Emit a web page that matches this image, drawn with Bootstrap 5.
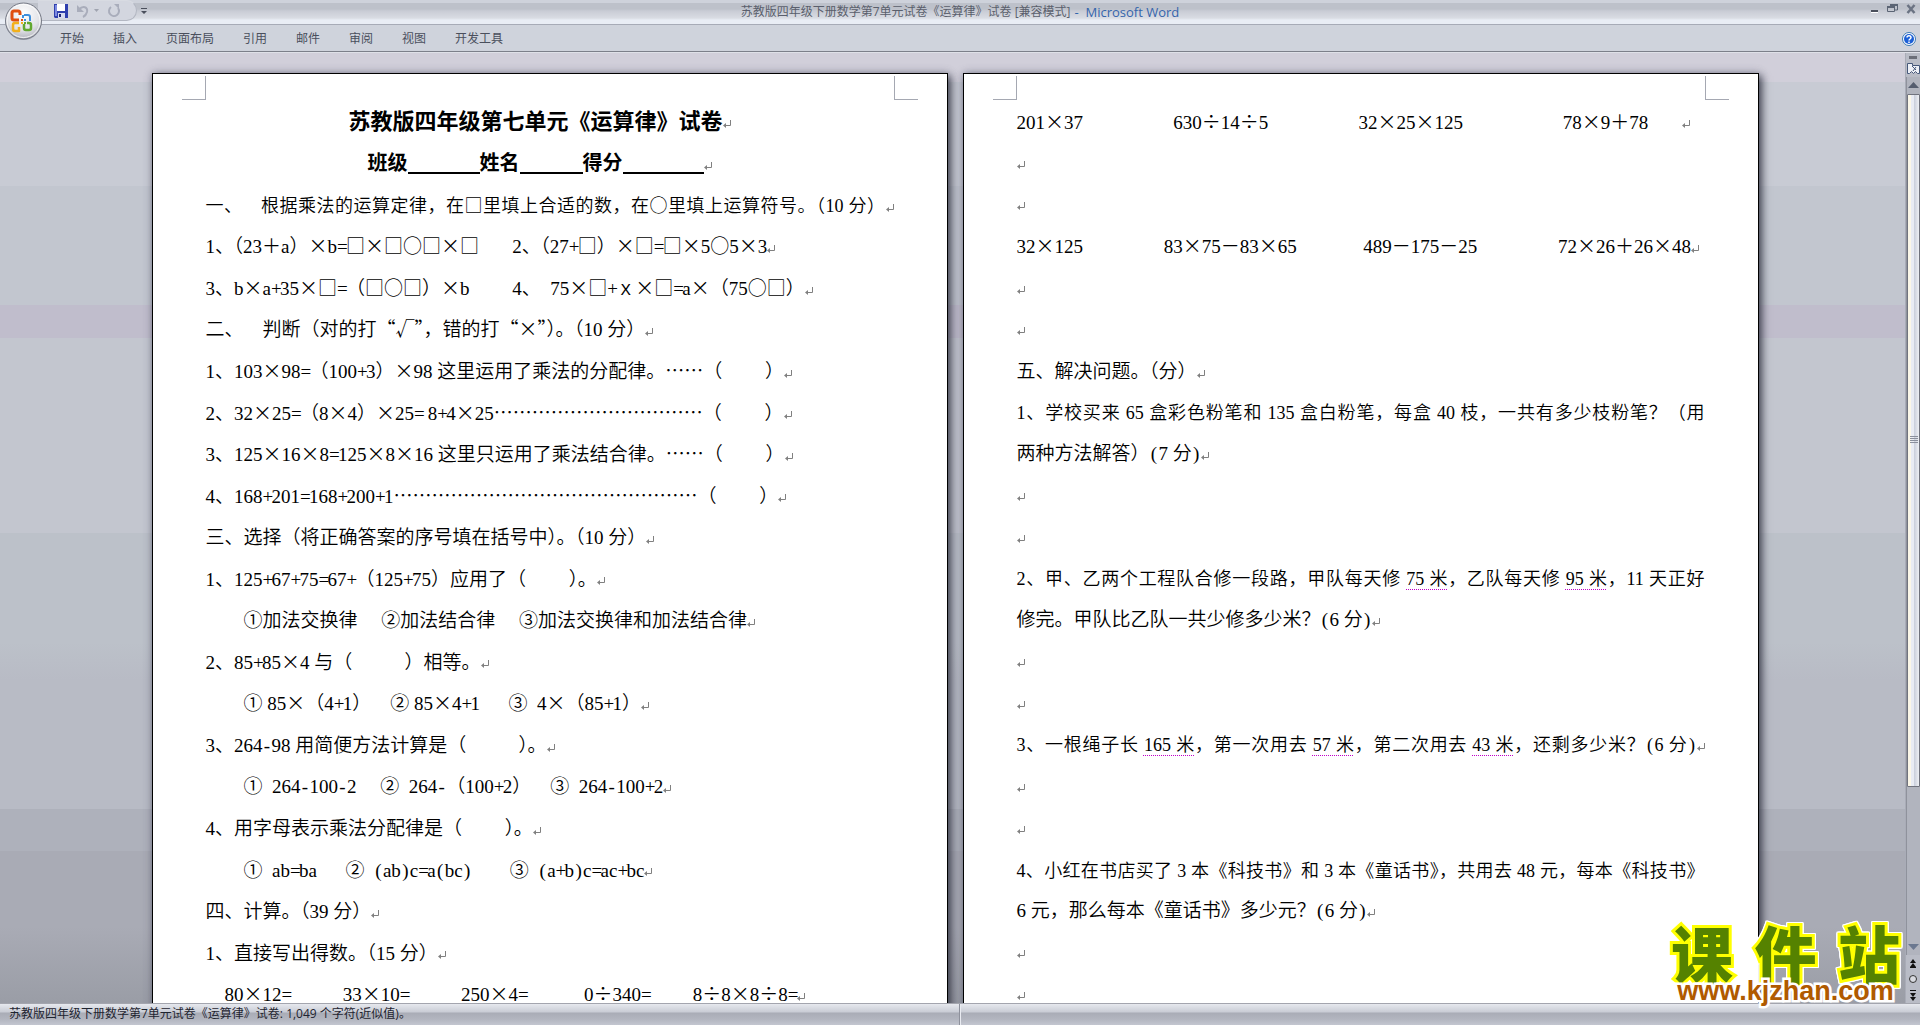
<!DOCTYPE html>
<html lang="zh-CN">
<head>
<meta charset="utf-8">
<meta name="viewport" content="width=device-width, initial-scale=1">
<title>苏教版四年级下册数学第7单元试卷《运算律》试卷</title>
<link href="https://cdn.jsdelivr.net/npm/bootstrap@5.3.0/dist/css/bootstrap.min.css" rel="stylesheet">
<style>
body{font:12px/16px "Open Sans","Noto Sans CJK SC",sans-serif;color:#1e2430;background:#cfd3dc}
.titlebar{height:25px;display:grid;grid-template-columns:1fr auto 1fr;background:linear-gradient(#ced2db 0 3px,#bdc1ca 3px 9px,#c9ccd5 11px,#d9dce3 18px,#e9edf5 20px 24px,#a7abb7 24px)}
.titlebar .doc-name{color:#5a5f6c;padding-bottom:1px}
.app-name{color:#3465ac;font-size:13px}
.plain{border:0;background:none;padding:0;line-height:0}
.orb{position:absolute;left:4px;top:2px;z-index:5}
.qat{margin-left:38px;height:21px;width:99px;padding-left:16px;border:1px solid #b3b7c2;border-top-color:#d8dbe2;border-left:0;border-radius:0 11px 11px 0;background:#d3d6df}
.ribbon{height:27px;background:#cfd3dc;border-bottom:1px solid #7c808a;padding:2px 0 0 60px;gap:29px}
.ribbon a{color:#4a4f5c;text-decoration:none}
.workspace{border-top:1px solid #dfe1e8;background:linear-gradient(#d1cfda 0 3%,#c8cbd4 3% 14%,#c2c6cf 14% 26.5%,#c0bdcc 26.5% 30%,#c3c6cf 30% 50.5%,#bcc1c9 50.5% 62%,#b8bbc5 66% 79.6%,#aeb1bb 79.6% 84%,#a9abb5 84% 92%,#9a9da6)}
.desk{gap:15px;padding:20px 0 0 5px}
.sheet{flex:0 1 796px;margin-bottom:-13px;padding:27px 53px 0;background:#fff;border:1px solid #000;box-shadow:3px 3px 8px rgba(30,32,45,.75),0 0 8px rgba(110,112,140,.45);color:#000;font:19px/22px "Liberation Serif","Noto Sans CJK SC",serif;font-weight:350}
.crop{position:absolute;top:2px;width:24px;height:24px;border-bottom:1px solid #a5a8b2}
.crop-l{left:29px;border-right:1px solid #a5a8b2}
.crop-r{right:29px;border-left:1px solid #a5a8b2}
.lines{display:grid;grid-template-rows:repeat(22,1fr);height:100%}
.ln{margin:0;white-space:nowrap;align-self:center;min-width:0}
.fill{font-size:18px;text-align:justify;text-align-last:justify}
.head1{font-size:22px;font-weight:700;text-align:center;padding-right:20px}
.head2{font-size:20px;font-weight:700;text-align:center;padding-right:20px}
.blank{display:inline-block;height:20px;border-bottom:2px solid #000;vertical-align:-4px}
.b1{width:72px}.b2{width:63px}.b3{width:81px}
.fw,.hw{display:inline-block;text-align:center;text-align-last:center}
.fw{width:1em;font-family:"Noto Sans CJK SC",sans-serif}
.hw{width:9px}
.hc{text-align:left;text-align-last:left;font-family:"Noto Sans CJK SC",sans-serif;font-feature-settings:"halt"}
.tag{text-decoration:underline dotted #c000c8 1px;text-underline-offset:4px}
.scroll{width:15px;background:#b9bcc6;border-left:1px solid #a9acb7}
.track{background:#b1b4be;border-left:1px solid #8f929c}
.thumb{height:82%;border:1px solid #70737e;border-radius:1px;background:linear-gradient(90deg,#fbf7e8 0 25%,#e9ecf4 30% 50%,#c9cedb 55%,#eef0f5)}
.status{height:22px;border-top:1px solid #a3a5ae;background:linear-gradient(#e6e8ee,#c9ccd5 8px,#a9acb6 9px,#b2b5bf 15px,#c3c6d0)}
.status > div{padding:2px 9px}
.status > div + div{border-left:1px solid #e9ebf1;box-shadow:-1px 0 #8e919c}
.stamp{position:absolute;right:20px;bottom:22px;width:229px;z-index:4;line-height:1}
.stamp .name{font:900 62px/54px "Noto Sans CJK SC",sans-serif;color:#558200;-webkit-text-stroke:6px #ff0;paint-order:stroke fill;filter:drop-shadow(1px 0 #fff) drop-shadow(-1px 0 #fff) drop-shadow(0 1px #fff) drop-shadow(0 -1px #fff)}
.stamp .site{font:bold 27px/24px "Liberation Sans",sans-serif;color:#b05a00;-webkit-text-stroke:5px #fff;paint-order:stroke fill;text-decoration:none;text-align:center;position:relative}
</style>
<script src="https://cdn.jsdelivr.net/npm/bootstrap@5.3.0/dist/js/bootstrap.bundle.min.js"></script>
</head>
<body class="vh-100 d-flex flex-column overflow-hidden position-relative">
<svg width="0" height="0" class="position-absolute"><symbol id="pm" viewBox="0 0 8 8"><path d="M7.5 0v5.5H2" fill="none" stroke="#808080"/><path d="M0 5.5 3 3v5z" fill="#808080"/></symbol></svg>

<button class="plain orb" aria-label="Office 按钮">
<svg width="39" height="39" viewBox="0 0 39 39"><defs><radialGradient id="og" cx=".5" cy=".3" r=".75"><stop offset="0" stop-color="#fff"/><stop offset=".6" stop-color="#e2e3e8"/><stop offset="1" stop-color="#a7a9b2"/></radialGradient></defs>
<circle cx="19.500" cy="20" r="18" fill="#777b88" opacity=".55"/><circle cx="19.500" cy="19" r="18" fill="url(#og)" stroke="#777b87"/><circle cx="19.500" cy="19" r="16.500" fill="none" stroke="#fff" opacity=".8"/>
<g fill="none" stroke-width="3" stroke-linejoin="round"><path d="M15 18H10q-2 0-2-2v-5q0-2 2-2h4q2 0 2 2v2" stroke="#e04e10"/><path d="M20 13h4q2 0 2 2v4M19 13v3" stroke="#3e8fdc" stroke-width="2"/><path d="M15 21h-4q-2 0-2 2v4q0 2 2 2h4v-4" stroke="#f2b01c" stroke-width="2.500"/><path d="M20 22v4q0 2 2 2h3q2 0 2-2v-3q0-2-2-2h-2" stroke="#62a830" stroke-width="2.500"/></g>
<g><path d="M17 17h2v2h-2z" fill="#e04e10"/><path d="M20 17h2v2h-2z" fill="#3e8fdc"/><path d="M17 20h2v2h-2z" fill="#f2b01c"/><path d="M20 20h2v2h-2z" fill="#62a830"/></g></svg></button>

<header class="titlebar flex-shrink-0">
<div class="d-flex align-items-start">
<div class="qat d-flex align-items-center">
<button class="plain" aria-label="保存"><svg width="14" height="14" viewBox="0 0 14 14"><path d="M0 0h14v14H1l-1-1z" fill="#2f3fae"/><path d="M1 1h2v11H1z" fill="#7d8ae0"/><path d="M3 0h8v7H3z" fill="#fff"/><path d="M4 9h7v5H4z" fill="#d7dbf0"/><path d="M5 10h2v3H5z" fill="#1c2573"/></svg></button>
<button class="plain ms-2" aria-label="撤消"><svg width="14" height="14" viewBox="0 0 14 14"><path d="M3 5.500C7 1 12 3 11 8c-.5 2-2 4-4 5" fill="none" stroke="#a9adbb" stroke-width="2"/><path d="M1 1v7h7z" fill="#a9adbb"/></svg></button>
<svg class="ms-1" width="5" height="3"><path d="M0 0h5L2.500 3z" fill="#a0a4b0"/></svg>
<button class="plain ms-2" aria-label="重复"><svg width="14" height="14" viewBox="0 0 14 14"><path d="M4 3a5 5 0 1 0 7 1" fill="none" stroke="#a9adbb" stroke-width="2"/><path d="M7 0h5v5z" fill="#a9adbb"/></svg></button>
</div>
<button class="plain pt-2 ms-1" aria-label="自定义快速访问工具栏"><svg width="6" height="7"><path d="M0 0h6v1H0zM0 3h6L3 6z" fill="#4a4f5c"/></svg></button>
</div>
<div class="doc-name d-flex align-items-center"><span>苏教版四年级下册数学第7单元试卷《运算律》试卷 [兼容模式]</span><span class="app-name ms-1">- &nbsp;Microsoft Word</span></div>
<div class="d-flex justify-content-end align-items-start gap-2 pe-1 pt-1">
<button class="plain" aria-label="最小化"><svg width="9" height="10"><path d="M1 6h7v2H1z" fill="#4a4f5c"/><path d="M1 8h7v1H1z" fill="#fff"/></svg></button>
<button class="plain" aria-label="还原"><svg width="11" height="10"><path d="M3.500 3V.5h7V6H8M.5 2.500h7v5h-7z" fill="none" stroke="#5b6474"/><path d="M3 0h8v2H3zM0 2h8v2H0z" fill="#5b6474"/></svg></button>
<button class="plain" aria-label="关闭"><svg width="10" height="10"><path d="M1.500 1 8.500 9M8.500 1 1.500 9" stroke="#6b7383" stroke-width="2.500"/></svg></button>
</div>
</header>

<nav class="ribbon d-flex align-items-center flex-shrink-0">
<a href="#">开始</a><a href="#">插入</a><a href="#">页面布局</a><a href="#">引用</a><a href="#">邮件</a><a href="#">审阅</a><a href="#">视图</a><a href="#">开发工具</a>
<button class="plain ms-auto me-1" aria-label="帮助"><svg width="14" height="14" viewBox="0 0 14 14"><circle cx="7" cy="7" r="6.500" fill="#fff" stroke="#3c78b4"/><circle cx="7" cy="7" r="5" fill="#1c5fd6"/><path d="M5 5.500C5 3 9 3 9 5.500 9 7 7 7 7 8.500M7 9.500V11" fill="none" stroke="#fff" stroke-width="1.500"/></svg></button>
</nav>

<main class="workspace flex-fill d-flex overflow-hidden">
<div class="desk flex-fill d-flex justify-content-center">
<article class="sheet position-relative">
<span class="crop crop-l"></span><span class="crop crop-r"></span>
<div class="lines">
<h1 class="ln head1">苏教版四年级第七单元《运算律》试卷</h1>
<p class="ln head2">班级<span class="blank b1"></span>姓名<span class="blank b2"></span>得分<span class="blank b3"></span></p>
<p class="ln fill marked">一、&emsp;根据乘法的运算定律，在□里填上合适的数，在○里填上运算符号。（10 分）</p>
<p class="ln">1、（23＋a）×b=□×□○□×□&ensp;&ensp;&ensp; 2、（27+□）×□=□×5○5×3</p>
<p class="ln">3、b×a+35×□=（□○□）×b&ensp;&ensp;&ensp;&ensp; 4、&ensp;75×□+ｘ×□=a×（75○□）</p>
<p class="ln">二、&emsp;判断（对的打“√”，错的打“×”）。（10 分）</p>
<p class="ln">1、103×98=（100+3）×98 这里运用了乘法的分配律。……（&ensp;&ensp;&ensp;&ensp; ）</p>
<p class="ln">2、32×25=（8×4）×25= 8+4×25……………………………（&ensp;&ensp;&ensp;&ensp; ）</p>
<p class="ln">3、125×16×8=125×8×16 这里只运用了乘法结合律。……（&ensp;&ensp;&ensp;&ensp; ）</p>
<p class="ln">4、168+201=168+200+1…………………………………………（&ensp;&ensp;&ensp;&ensp; ）</p>
<p class="ln">三、选择（将正确答案的序号填在括号中）。（10 分）</p>
<p class="ln">1、125+67+75=67+（125+75）应用了（&ensp;&ensp;&ensp;&ensp; ）。</p>
<p class="ln">&emsp;&emsp;①加法交换律&ensp;&ensp; ②加法结合律&ensp;&ensp; ③加法交换律和加法结合律</p>
<p class="ln">2、85+85×4 与（&ensp;&ensp;&ensp;&ensp;&ensp; ）相等。</p>
<p class="ln">&emsp;&emsp;① 85×（4+1）&ensp;&ensp;② 85×4+1&ensp;&ensp;&ensp;③&ensp;4×（85+1）</p>
<p class="ln">3、264-98 用简便方法计算是（&ensp;&ensp;&ensp;&ensp;&ensp; ）。</p>
<p class="ln">&emsp;&emsp;①&ensp;264-100-2&ensp;&ensp; ②&ensp;264-（100+2）&ensp;&ensp;③&ensp;264-100+2</p>
<p class="ln">4、用字母表示乘法分配律是（&ensp;&ensp;&ensp;&ensp; ）。</p>
<p class="ln">&emsp;&emsp;①&ensp;ab=ba&ensp;&ensp;&ensp;②&ensp;(ab)c=a(bc)&ensp;&ensp;&ensp;&ensp;③&ensp;(a+b)c=ac+bc</p>
<p class="ln">四、计算。（39 分）</p>
<p class="ln">1、直接写出得数。（15 分）</p>
<p class="ln">&ensp;&ensp;80×12=&ensp;&ensp;&ensp;&ensp;&ensp; 33×10=&ensp;&ensp;&ensp;&ensp;&ensp; 250×4=&ensp;&ensp;&ensp;&ensp;&ensp;&ensp;0÷340=&ensp;&ensp;&ensp;&ensp; 8÷8×8÷8=</p>
</div>
</article>
<article class="sheet position-relative">
<span class="crop crop-l"></span><span class="crop crop-r"></span>
<div class="lines">
<p class="ln">201×37&ensp;&ensp;&ensp;&ensp;&ensp;&ensp;&ensp;&ensp;&ensp; 630÷14÷5&ensp;&ensp;&ensp;&ensp;&ensp;&ensp;&ensp;&ensp;&ensp; 32×25×125&ensp;&ensp;&ensp;&ensp;&ensp;&ensp;&ensp;&ensp;&ensp;&ensp; 78×9＋78&ensp;&ensp;&ensp; </p>
<p class="ln"></p>
<p class="ln"></p>
<p class="ln">32×125&ensp;&ensp;&ensp;&ensp;&ensp;&ensp;&ensp;&ensp; 83×75－83×65&ensp;&ensp;&ensp;&ensp;&ensp;&ensp;&ensp;489－175－25&ensp;&ensp;&ensp;&ensp;&ensp;&ensp;&ensp;&ensp; 72×26＋26×48</p>
<p class="ln"></p>
<p class="ln"></p>
<p class="ln">五、解决问题。（分）</p>
<p class="ln fill">1、学校买来 65 盒彩色粉笔和 135 盒白粉笔，每盒 40 枝，一共有多少枝粉笔？（用</p>
<p class="ln">两种方法解答）(7 分)</p>
<p class="ln"></p>
<p class="ln"></p>
<p class="ln fill">2、甲、乙两个工程队合修一段路，甲队每天修 <span class="tag">75 米</span>，乙队每天修 <span class="tag">95 米</span>，11 天正好</p>
<p class="ln">修完。甲队比乙队一共少修多少米？(6 分)</p>
<p class="ln"></p>
<p class="ln"></p>
<p class="ln fill marked">3、一根绳子长 <span class="tag">165 米</span>，第一次用去 <span class="tag">57 米</span>，第二次用去 <span class="tag">43 米</span>，还剩多少米？(6 分)</p>
<p class="ln"></p>
<p class="ln"></p>
<p class="ln fill">4、小红在书店买了 3 本《科技书》和 3 本《童话书》，共用去 48 元，每本《科技书》</p>
<p class="ln">6 元，那么每本《童话书》多少元？(6 分)</p>
<p class="ln"></p>
<p class="ln"></p>
</div>
</article>
</div>
<div class="scroll d-flex flex-column align-items-stretch text-center">
<svg width="14" height="24" viewBox="0 0 14 24"><path d="M3 3h8v3H3z" fill="#6b6e78"/><path d="M1.500 10.500h5v2h7v8h-2l-2-2-2 2-2-2-2 2h-2z" fill="#eef0f6" stroke="#46587a"/><path d="M6 13l4 4M10 14l-3 4" stroke="#46587a"/></svg>
<div class="track flex-fill d-flex flex-column">
<svg width="13" height="17"><path d="M1 11h11L6.500 5z" fill="#555d6e"/></svg>
<div class="flex-fill"><div class="thumb d-flex align-items-center justify-content-center"><svg width="8" height="9"><path d="M0 .5h8M0 2.500h8M0 4.500h8M0 6.500h8" stroke="#8a8f9c"/></svg></div></div>
<svg width="13" height="16"><path d="M1 5h11L6.500 11z" fill="#6b7890"/></svg>
</div>
<svg width="14" height="48" viewBox="0 0 14 48"><path d="M7 4 10 8H4zM7 8l3 4H4zM4 12h6v1H4zM7 42 10 38H4zM7 46l3-4H4zM4 35h6v1H4z" fill="#111"/><circle cx="7" cy="24" r="3.500" fill="#d8dae0" stroke="#333"/></svg>
</div>
</main>

<footer class="status d-flex flex-shrink-0"><div class="col-6">苏教版四年级下册数学第7单元试卷《运算律》试卷: 1,049 个字符(近似值)。</div><div class="flex-fill"></div></footer>

<div class="stamp">
<div class="name d-flex justify-content-between"><span>课</span><span>件</span><span>站</span></div>
<a class="site d-block" href="#">www.kjzhan.com</a>
</div>

<script>
// Typeset every line on the half/full-width grid and end it with a paragraph mark.
const token = /[。，、）”》](?=[。，、）（《”])|[×÷□○…“”√＋－ｘ①②③]|[-+=()]/g;
document.querySelectorAll('.ln').forEach(line => {
  const walker = document.createTreeWalker(line, NodeFilter.SHOW_TEXT);
  const nodes = [];
  while (walker.nextNode()) nodes.push(walker.currentNode);
  nodes.forEach(node => {
    const out = document.createDocumentFragment();
    let last = 0;
    for (const m of node.data.matchAll(token)) {
      out.append(node.data.slice(last, m.index));
      const s = document.createElement('span');
      s.textContent = m[0];
      const closing = /[。，、）》]/.test(m[0]) || (m[0] === '”' && /[。，、）]/.test(node.data[m.index + 1] || ''));
      s.className = /[-+=()]/.test(m[0]) ? 'hw' : closing ? 'hw hc' : 'fw';
      out.append(s);
      last = m.index + m[0].length;
    }
    out.append(node.data.slice(last));
    node.replaceWith(out);
  });
  if (!line.classList.contains('fill') || line.classList.contains('marked'))
    line.insertAdjacentHTML('beforeend', '<svg width="8" height="8" aria-hidden="true"><use href="#pm"/></svg>');
});
</script>
</body>
</html>
